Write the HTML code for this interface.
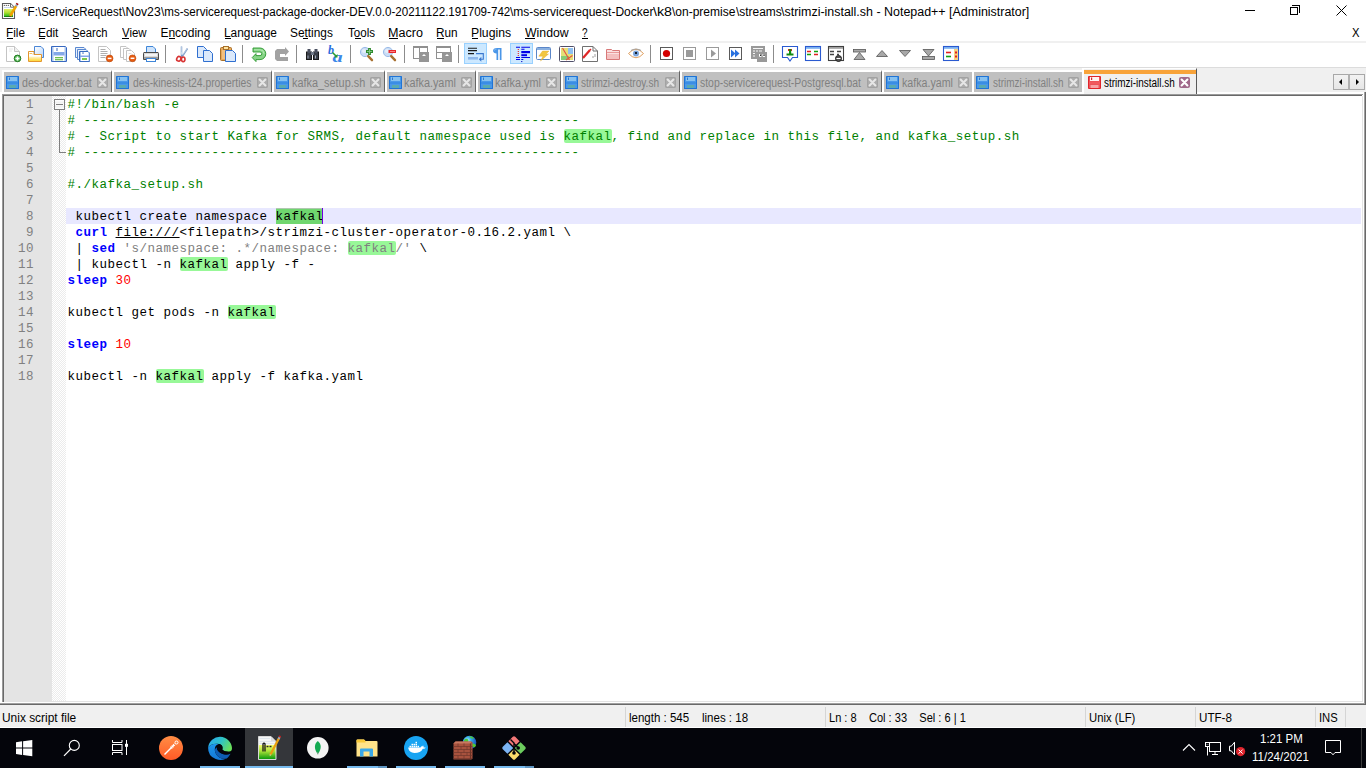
<!DOCTYPE html>
<html><head><meta charset="utf-8">
<style>
*{box-sizing:border-box}
html,body{margin:0;padding:0}
body{width:1366px;height:768px;position:relative;overflow:hidden;background:#fff;font-family:"Liberation Sans",sans-serif;font-size:12px;color:#000}
.a{position:absolute}
.tx{position:absolute;font-family:"Liberation Sans",sans-serif;font-size:12px;line-height:14px;white-space:pre;transform-origin:0 0}
.ul{position:absolute;top:38px;height:1px;background:#000}
.sep{position:absolute;top:45px;width:1px;height:18px;background:#8c8c8c}
.ic{position:absolute;overflow:visible}
.tab{position:absolute;top:70px;height:22px;background:#c0c0c0;border-left:2px solid #fff;border-top:2px solid #fff;border-right:1px solid #666}
.tab .fi{position:absolute;left:2px;top:4px}
.tab .x{position:absolute;top:5px;width:11px;height:11px;background:#acacac;border-radius:2px;box-shadow:inset 0 0 0 1px #a2a2a2}
.x svg{position:absolute;left:0;top:0}
.code{position:absolute;left:67.5px;top:97px;font-family:"Liberation Mono",monospace;font-size:12.5px;letter-spacing:0.5px;line-height:16px;white-space:pre}
.code div{height:16px}
.ln{position:absolute;left:6px;top:97px;width:28px;font-family:"Liberation Mono",monospace;font-size:12.5px;letter-spacing:0.5px;line-height:16px;text-align:right;color:#808080;white-space:pre}
.c{color:#008000}
.k{color:#0000ff;font-weight:bold}
.s{color:#808080}
.n{color:#ff0000}
.hlb{position:absolute;width:48px;height:14px;background:#98f898;border-radius:2px}
.ssep{position:absolute;top:707px;width:1px;height:20px;background:#d5d5d5}
.tbu{position:absolute;top:766px;height:2px;background:#76b9ed}

</style></head><body>
<svg width="0" height="0" style="position:absolute">
<defs>
<symbol id="sv" viewBox="0 0 13 13"><rect x="0" y="0" width="13" height="13" rx="0.5" fill="#1f74d6"/><rect x="1" y="1" width="11" height="11" fill="#4a98e8"/><rect x="2" y="1" width="9" height="4" fill="#86c1f0"/><rect x="3" y="1.5" width="1" height="2.5" fill="#2f78d0"/><rect x="1" y="6" width="11" height="2" fill="#3b8de4"/><rect x="3" y="9" width="7" height="3" fill="#5aaab0"/></symbol>
<symbol id="svr" viewBox="0 0 13 13"><rect x="0" y="0" width="13" height="13" rx="1" fill="#e0242a"/><rect x="1" y="1" width="11" height="11" fill="#ee5258"/><rect x="2" y="1" width="9" height="4" fill="#fff2f2"/><rect x="3" y="1.5" width="1.2" height="2.5" fill="#d0282e"/><rect x="1" y="6" width="11" height="2" fill="#f0595e"/><rect x="2.5" y="9" width="8" height="3" fill="#f6a3a6"/></symbol>
<symbol id="cx" viewBox="0 0 11 11"><path d="M2.6 2.6L8.4 8.4M8.4 2.6L2.6 8.4" stroke="#e6e6e6" stroke-width="2.1" stroke-linecap="round"/></symbol>
<symbol id="cxa" viewBox="0 0 11 11"><path d="M2.6 2.6L8.4 8.4M8.4 2.6L2.6 8.4" stroke="#fff" stroke-width="2.1" stroke-linecap="round"/></symbol>
</defs></svg>

<!-- title bar icon -->
<svg class="a" style="left:0;top:0" width="22" height="22" viewBox="0 0 22 22">
<defs><linearGradient id="nppg" x1="0" y1="0" x2="0" y2="1"><stop offset="0" stop-color="#e6ee6a"/><stop offset="0.45" stop-color="#b0e030"/><stop offset="0.85" stop-color="#40c020"/><stop offset="1" stop-color="#005a00"/></linearGradient></defs>
<path d="M2.5 3.5H10.5L14.5 7.5V18.5H2.5Z" fill="#fff" stroke="#5c5c5c" stroke-width="1.1"/>
<path d="M10.5 3.8V7.2H14" fill="#fff" stroke="#5c5c5c" stroke-width="0.9"/>
<circle cx="4.4" cy="5.4" r="0.7" fill="#707070"/><circle cx="6.4" cy="5.4" r="0.7" fill="#707070"/><circle cx="8.4" cy="5.4" r="0.7" fill="#707070"/>
<path d="M4 7.5H10" stroke="#c8d8f0"/>
<rect x="4" y="9" width="9" height="8" fill="url(#nppg)"/>
<path d="M10.2 16L16.2 5.8" stroke="#f0a400" stroke-width="2.6"/>
<path d="M10.2 16L10 17" stroke="#604020" stroke-width="1.2"/>
<path d="M16 6.2L16.8 4.8" stroke="#8aa0c8" stroke-width="2.2"/>
<path d="M16.8 4.6L17.6 3.3" stroke="#a00808" stroke-width="2.4"/>
</svg>
<!-- window controls -->
<div class="a" style="left:1245px;top:10px;width:10px;height:1px;background:#000"></div>
<div class="a" style="left:1290px;top:7px;width:8px;height:8px;border:1px solid #000"></div>
<div class="a" style="left:1292px;top:5px;width:8px;height:8px;border-top:1px solid #000;border-right:1px solid #000"></div>
<svg class="a" style="left:1336px;top:5px" width="11" height="11"><path d="M0.5 0.5L10.5 10.5M10.5 0.5L0.5 10.5" stroke="#000" stroke-width="1"/></svg>

<!-- menu underlines -->
<div class="ul" style="left:7px;width:6px"></div>
<div class="ul" style="left:39px;width:6px"></div>
<div class="ul" style="left:73px;width:6px"></div>
<div class="ul" style="left:122px;width:7px"></div>
<div class="ul" style="left:169px;width:6px"></div>
<div class="ul" style="left:225px;width:6px"></div>
<div class="ul" style="left:303px;width:5px"></div>
<div class="ul" style="left:355px;width:6px"></div>
<div class="ul" style="left:389px;width:9px"></div>
<div class="ul" style="left:437px;width:7px"></div>
<div class="ul" style="left:472px;width:6px"></div>
<div class="ul" style="left:525px;width:10px"></div>
<div class="ul" style="left:582px;width:6px"></div>

<div class="a" style="left:0;top:41px;width:1366px;height:2px;background:#f0f0f0"></div>

<!-- toolbar -->
<div class="sep" style="left:165px"></div>
<div class="sep" style="left:242px"></div>
<div class="sep" style="left:296px"></div>
<div class="sep" style="left:350px"></div>
<div class="sep" style="left:404px"></div>
<div class="sep" style="left:458px"></div>
<div class="sep" style="left:650px"></div>
<div class="sep" style="left:773px"></div>
<div class="a" style="left:464px;top:43px;width:23px;height:21px;background:#cce8ff;border:1px solid #99d1ff"></div>
<div class="a" style="left:510px;top:43px;width:23px;height:21px;background:#cce8ff;border:1px solid #99d1ff"></div>
<svg class="ic" style="left:6px;top:46px" width="16" height="16" viewBox="0 0 16 16"><path d="M0.5 0.5H8.5L13.5 5.5V15.5H0.5Z" fill="#fff" stroke="#c4c4c4"/><path d="M8.5 0.5V5.5H13.5" fill="#f0f0f0" stroke="#c4c4c4"/><path d="M3 3h4M3 5h3" stroke="#e6e6e6"/><circle cx="11.5" cy="12.4" r="3.3" fill="#58b858" stroke="#1f7a1f"/><path d="M11.5 10.4v4M9.5 12.4h4" stroke="#fff" stroke-width="1.5"/></svg>
<svg class="ic" style="left:28px;top:46px" width="17" height="16" viewBox="0 0 17 16"><defs><linearGradient id="opd" x1="0" y1="0" x2="1" y2="1"><stop offset="0" stop-color="#ffffff"/><stop offset="1" stop-color="#b8d4f8"/></linearGradient><linearGradient id="opf" x1="0" y1="0" x2="0" y2="1"><stop offset="0" stop-color="#fff6d0"/><stop offset="1" stop-color="#ffd838"/></linearGradient></defs><path d="M6.5 0.5H13L15.5 3V11.5H6.5Z" fill="url(#opd)" stroke="#4a86d6"/><path d="M0.5 5.5H6V8.5H13.5V15.5H0.5Z" fill="#fff" stroke="#e3962e"/><rect x="1" y="10.5" width="12" height="4.5" fill="url(#opf)"/><path d="M1.5 7.5H4L5 8.5" stroke="#f0c060" fill="none"/></svg>
<svg class="ic" style="left:51px;top:46px" width="16" height="16" viewBox="0 0 16 16"><path d="M0.5 0.5H14.5L15.5 1.5V15.5H0.5Z" fill="#fff" stroke="#3868c0"/><rect x="1" y="1" width="1.5" height="14" fill="#a8c4ee"/><rect x="13.5" y="1" width="1.5" height="14" fill="#a8c4ee"/><rect x="2.5" y="6" width="11" height="3.5" fill="#84a8e8"/><rect x="5.5" y="2" width="1" height="3" fill="#3868c0"/><rect x="4" y="11" width="8" height="1.3" fill="#70c050"/><rect x="4" y="13" width="8" height="1.3" fill="#70c050"/></svg>
<svg class="ic" style="left:75px;top:47px" width="15" height="15" viewBox="0 0 15 15"><path d="M0.5 0.5H9L10.5 2V10.5H0.5Z" fill="#e8f0fc" stroke="#5a88d0"/><path d="M2.5 2.5H11L12.5 4V12.5H2.5Z" fill="#e8f0fc" stroke="#5a88d0"/><path d="M4.5 4.5H13L14.5 6V14.5H4.5Z" fill="#fff" stroke="#3a6cc0"/><rect x="5" y="5" width="1" height="9" fill="#a8c4ee"/><rect x="13.5" y="6" width="0.9" height="8" fill="#a8c4ee"/><rect x="7.5" y="5.2" width="1" height="1.8" fill="#3a6cc0"/><rect x="5" y="8.5" width="9" height="1.5" fill="#84a8e8"/><rect x="7" y="11" width="5" height="2" fill="#7cc850"/></svg>
<svg class="ic" style="left:98px;top:46px" width="16" height="16" viewBox="0 0 16 16"><path d="M0.5 0.5H8.5L12.5 4.5V15.5H0.5Z" fill="#fff" stroke="#c4c4c4"/><path d="M2.5 3.5h5M2.5 5.5h7M2.5 7.5h7M2.5 9.5h6M2.5 11.5h5" stroke="#9a9a9a" stroke-width="0.8"/><circle cx="11.6" cy="12.4" r="3.4" fill="#e85a10"/><circle cx="11.6" cy="12.4" r="3.4" fill="none" stroke="#b84808" stroke-width="0.6"/><path d="M9.7 12.4h3.8" stroke="#fff" stroke-width="1.5"/></svg>
<svg class="ic" style="left:120px;top:46px" width="17" height="17" viewBox="0 0 17 17"><path d="M0.5 0.5H6L7.5 2V11.5H0.5Z" fill="#fff" stroke="#c4c4c4"/><path d="M3.5 2.5H9L10.5 4V13.5H3.5Z" fill="#fff" stroke="#c4c4c4"/><path d="M6.5 4.5H11.5L14.5 7.5V15.5H6.5Z" fill="#fff" stroke="#c4c4c4"/><path d="M8.5 7.5h3" stroke="#e0e0e0"/><circle cx="12.5" cy="12.3" r="3.4" fill="#e85a10"/><circle cx="12.5" cy="12.3" r="3.4" fill="none" stroke="#b84808" stroke-width="0.6"/><path d="M10.6 12.3h3.8" stroke="#fff" stroke-width="1.5"/></svg>
<svg class="ic" style="left:143px;top:46px" width="16" height="16" viewBox="0 0 16 16"><path d="M3.5 0.5H10L12.5 3V8.5H3.5Z" fill="#cfe4fb" stroke="#3f86d8"/><path d="M1 6.5H15A0.8 0.8 0 0 1 15.5 7.5V13.5H0.5V7.5A0.8 0.8 0 0 1 1 6.5Z" fill="#d8d8d8" stroke="#4a4a4a"/><rect x="2" y="8" width="12" height="2" fill="#f4f4f4"/><rect x="1" y="11" width="14" height="2" fill="#9c9c9c"/><rect x="3.5" y="12.5" width="9" height="3" fill="#fff" stroke="#3f86d8"/></svg>
<svg class="ic" style="left:176px;top:46px" width="13" height="16" viewBox="0 0 13 16"><path d="M5.5 11L5.5 0.5M6.2 10.5L11.5 2.5" stroke="#7c9cc8" stroke-width="1.5"/><path d="M5.5 9L5.5 1M6.5 9L11 3" stroke="#e8f0fa" stroke-width="0.5"/><path d="M5 8l1-2" stroke="#d0e0f0"/><ellipse cx="2.8" cy="12.8" rx="2" ry="2.4" fill="none" stroke="#d83434" stroke-width="1.6" transform="rotate(30 2.8 12.8)"/><ellipse cx="7.2" cy="13.3" rx="1.8" ry="2.3" fill="none" stroke="#d83434" stroke-width="1.6"/></svg>
<svg class="ic" style="left:197px;top:46px" width="16" height="16" viewBox="0 0 16 16"><path d="M0.5 0.5H6.5L9.5 3.5V11.5H0.5Z" fill="#dbe9fb" stroke="#2f6fd0"/><path d="M6.5 4.5H12.5L15.5 7.5V15.5H6.5Z" fill="#dbe9fb" stroke="#2f6fd0"/></svg>
<svg class="ic" style="left:220px;top:46px" width="16" height="16" viewBox="0 0 16 16"><rect x="0.5" y="1.5" width="11" height="13" rx="1" fill="#e8a85a" stroke="#a8702a"/><rect x="3.5" y="0.5" width="5" height="3" fill="#ffe4a0" stroke="#a8702a"/><rect x="2" y="4" width="8" height="9" fill="#f2c080"/><path d="M5.5 4.5H12.5L15.5 7.5V15.5H5.5Z" fill="#dbe9fb" stroke="#2f6fd0"/></svg>
<svg class="ic" style="left:252px;top:47px" width="15" height="16" viewBox="0 0 15 16"><path d="M1 1H8A5.8 5.8 0 0 1 8 12.6H4V14.6L0.2 10.6L4 6.6V8.6H8A1.8 1.8 0 0 0 8 5H1Z" fill="#86d486" stroke="#2a962e" stroke-width="0.9" stroke-linejoin="round"/><path d="M2 2.8H8A4 4 0 0 1 12 6.8" fill="none" stroke="#b8ecb8" stroke-width="0.9"/></svg>
<svg class="ic" style="left:275px;top:47px" width="14" height="14" viewBox="0 0 14 14"><path d="M2 2H10V0L14 4.5L10 9V7H5V10H13V14H2L0 12V4Z" fill="#a2a2a2"/></svg>
<svg class="ic" style="left:306px;top:48px" width="13" height="12" viewBox="0 0 13 12"><rect x="0.5" y="4" width="5" height="7.5" fill="#3a3f48" stroke="#1a1a1a"/><rect x="7.5" y="4" width="5" height="7.5" fill="#3a3f48" stroke="#1a1a1a"/><rect x="1.5" y="1" width="3" height="4" fill="#4a5060"/><rect x="8.5" y="1" width="3" height="4" fill="#4a5060"/><rect x="5" y="4" width="3" height="3" fill="#6d7686"/><path d="M2 7.5v3M9.5 7.5v3" stroke="#a0a8b8"/></svg>
<svg class="ic" style="left:327px;top:45px" width="18" height="18" viewBox="0 0 18 18"><text x="1" y="9" font-family="Liberation Serif" font-style="italic" font-weight="bold" font-size="12" fill="#2a6ee0">b</text><text transform="translate(5.5,17) scale(1.45,1)" font-family="Liberation Serif" font-style="italic" font-weight="bold" font-size="14" fill="#3a86e8">a</text><path d="M5.5 7.5L9.5 11.5" stroke="#2a9a30" stroke-width="1.6"/><path d="M10.5 12.5L10.5 9L7 12.5Z" fill="#2a9a30"/></svg>
<svg class="ic" style="left:360px;top:47px" width="14" height="15" viewBox="0 0 14 15"><circle cx="5" cy="5" r="4.6" fill="#c9dcf5" stroke="#9cbce8"/><circle cx="4" cy="4" r="2" fill="#e4eefa"/><path d="M8.2 9.2L12 13.2" stroke="#a87030" stroke-width="2.4" stroke-linecap="round"/><path d="M9.5 1v7M6 4.5h7" stroke="#2e8a2e" stroke-width="2.8"/><path d="M9.5 2v5M7 4.5h5" stroke="#88cc88" stroke-width="0.9"/></svg>
<svg class="ic" style="left:383px;top:47px" width="14" height="15" viewBox="0 0 14 15"><circle cx="5" cy="5" r="4.6" fill="#c9dcf5" stroke="#9cbce8"/><circle cx="4" cy="4" r="2" fill="#e4eefa"/><path d="M8.2 9.2L12 13.2" stroke="#a87030" stroke-width="2.4" stroke-linecap="round"/><rect x="5.5" y="3" width="7.5" height="3" fill="#e8262a"/><path d="M7 4.5h5" stroke="#ff9a9a" stroke-width="0.8"/></svg>
<svg class="ic" style="left:413px;top:46px" width="16" height="16" viewBox="0 0 16 16"><rect x="0.5" y="0.5" width="14" height="12" fill="#fff" stroke="#909090"/><rect x="0" y="0" width="15" height="2" fill="#909090"/><path d="M6.5 2v11" stroke="#909090"/><rect x="6" y="6" width="10" height="10" fill="#959595"/><path d="M9 10L11 8L13 10Z" fill="#fff"/></svg>
<svg class="ic" style="left:436px;top:46px" width="16" height="16" viewBox="0 0 16 16"><rect x="0.5" y="0.5" width="14" height="12" fill="#fff" stroke="#909090"/><rect x="0" y="0" width="15" height="2" fill="#909090"/><path d="M1 6.5h13" stroke="#909090"/><rect x="6" y="6" width="10" height="10" fill="#959595"/><path d="M9 10L11 8L13 10Z" fill="#fff"/></svg>
<svg class="ic" style="left:462px;top:42px" width="24" height="24" viewBox="0 0 24 24"><path d="M6 6.3H15M6 8.6H15M6 11.6H12" stroke="#181818" stroke-width="1.1"/><rect x="6" y="15" width="10" height="2.6" fill="#8cb6ea"/><path d="M14 11.6H21.3V17.3H18.5" fill="none" stroke="#3a78d0" stroke-width="1.1"/><path d="M16.8 17.3L19.3 14.8V19.8Z" fill="#3a78d0"/></svg>
<svg class="ic" style="left:493px;top:48px" width="9" height="13" viewBox="0 0 9 13"><path d="M3.5 0H8.5V12H6.8V1.5H5.2V12H3.5V5.6C1.5 5.6 0 4.4 0 2.8C0 1.2 1.5 0 3.5 0Z" fill="#4a96e8"/><path d="M1.2 2.5C1.5 1.5 2.5 1 3.5 1" stroke="#9cc8f4" stroke-width="0.8" fill="none"/></svg>
<svg class="ic" style="left:462px;top:42px" width="72" height="24" viewBox="0 0 72 24"><path d="M54 5.3H58M59.3 5.3H68M59.3 7.3H62.5M54 15.5H58M59.3 15.5H68M54 17.5H58M59.3 17.5H61.3" stroke="#0000e8" stroke-width="1.1"/><rect x="59.3" y="9" width="8.7" height="2.2" fill="#0000e8"/><rect x="59.3" y="12.2" width="5.7" height="2" fill="#0000e8"/><rect x="59.2" y="19" width="1.1" height="1.1" fill="#0000c8"/><path d="M56.3 7v1M56.3 9v1M56.3 11v1M56.3 13v1" stroke="#e82020" stroke-width="1.1"/></svg>
<svg class="ic" style="left:536px;top:47px" width="15" height="14" viewBox="0 0 15 14"><rect x="0.5" y="0.5" width="14" height="12" rx="1" fill="#fff" stroke="#5a86c8"/><rect x="1" y="1" width="13" height="2" fill="#8ab0e0"/><path d="M6.5 4H13L10 7H12.5L4.5 14L7 9.2H2.8Z" fill="#f2c640" stroke="#e0a828" stroke-width="0.4"/></svg>
<svg class="ic" style="left:559px;top:46px" width="16" height="16" viewBox="0 0 16 16"><rect x="0.5" y="0.5" width="15" height="15" rx="1" fill="#fff" stroke="#50506a"/><rect x="2" y="2" width="12" height="12" fill="#e4e078"/><rect x="9" y="2" width="5" height="6" fill="#90c0f0"/><rect x="2" y="10" width="8" height="4" fill="#88cc78"/><path d="M3.5 2L10.5 14M13.5 9.5L7 14" stroke="#e85040" stroke-width="1.1"/></svg>
<svg class="ic" style="left:582px;top:46px" width="16" height="16" viewBox="0 0 16 16"><path d="M0.5 0.5H11L15.5 5V15.5H0.5Z" fill="#fff" stroke="#707070"/><path d="M11 0.5V5H15.5" fill="none" stroke="#707070"/><path d="M1 12L8 4" stroke="#e02828" stroke-width="2.2"/><path d="M8 4L9 3" stroke="#e02828" stroke-width="1.5"/><path d="M11 10v2M13 8v3" stroke="#a0a0a0"/></svg>
<svg class="ic" style="left:606px;top:49px" width="14" height="11" viewBox="0 0 14 11"><path d="M0.5 0.5H5.5L6.5 1.5H13.5V10.5H0.5Z" fill="#fbe0e0" stroke="#d87878"/><path d="M1 3.5H13" stroke="#e89a9a"/><rect x="1" y="5" width="12" height="5" fill="#f4c0c0"/></svg>
<svg class="ic" style="left:628px;top:48px" width="16" height="11" viewBox="0 0 16 11"><path d="M0.5 5.5Q8 -3 15.5 5.5Q8 14 0.5 5.5Z" fill="#fff" stroke="#e0a060" stroke-width="1"/><path d="M3 2.5Q8 -0.5 13 2.5" stroke="#a0a0a0" stroke-width="1.2" fill="none"/><circle cx="8" cy="5.5" r="3" fill="#7aa4dc"/><circle cx="8" cy="5" r="1.1" fill="#000"/></svg>
<svg class="ic" style="left:660px;top:47px" width="13" height="13" viewBox="0 0 13 13"><rect x="0.5" y="0.5" width="12" height="12" fill="#fff" stroke="#5a5a5a"/><circle cx="6.5" cy="6.5" r="3.6" fill="#d40000"/></svg>
<svg class="ic" style="left:683px;top:47px" width="13" height="13" viewBox="0 0 13 13"><rect x="0.5" y="0.5" width="12" height="12" fill="#fff" stroke="#9a9a9a"/><rect x="3" y="3" width="7" height="7" fill="#9a9a9a"/></svg>
<svg class="ic" style="left:706px;top:47px" width="13" height="13" viewBox="0 0 13 13"><rect x="0.5" y="0.5" width="12" height="12" fill="#fff" stroke="#9a9a9a"/><path d="M5 2.5L10 6.5L5 10.5Z" fill="#9a9a9a"/></svg>
<svg class="ic" style="left:729px;top:47px" width="13" height="13" viewBox="0 0 13 13"><rect x="0.5" y="0.5" width="12" height="12" fill="#fff" stroke="#5a5a5a"/><path d="M2 2.5L6.5 6.5L2 10.5ZM6 2.5L10.5 6.5L6 10.5Z" fill="#2a72e0"/></svg>
<svg class="ic" style="left:751px;top:46px" width="16" height="16" viewBox="0 0 16 16"><rect x="0" y="0" width="14" height="13" fill="#999"/><path d="M2 2.5h10M2 5h2M5 5h2M8 5h3M2 7.5h2M2 10h2" stroke="#fff" stroke-width="0.9"/><rect x="6" y="6" width="10" height="10" fill="#999"/><path d="M8.5 8v2.5h2M12 8v2.5h2" stroke="#fff" stroke-width="1"/></svg>
<svg class="ic" style="left:782px;top:46px" width="16" height="16" viewBox="0 0 16 16"><path d="M0.5 0.5H15.5V11.5H10.5L8 15L5.5 11.5H0.5Z" fill="#fff" stroke="#2a5ad0" stroke-width="1.1"/><path d="M6 3h4v2h-4z" fill="#e02020"/><rect x="7" y="3" width="2.2" height="5" fill="#108a10"/><rect x="4.5" y="7.5" width="7" height="2" fill="#108a10"/></svg>
<svg class="ic" style="left:805px;top:46px" width="16" height="15" viewBox="0 0 16 15"><rect x="0.5" y="0.5" width="15" height="14" fill="#fff" stroke="#2a5ad0" stroke-width="1.1"/><rect x="1" y="1" width="14" height="1.8" fill="#7ab0f0"/><path d="M2 5.5h4M9 8.5h4" stroke="#e02020" stroke-width="1.6"/><path d="M9 5.5h4M2 8.5h4" stroke="#10a010" stroke-width="1.6"/></svg>
<svg class="ic" style="left:828px;top:46px" width="16" height="16" viewBox="0 0 16 16"><rect x="0.5" y="0.5" width="15" height="14" fill="#fff" stroke="#404040" stroke-width="1.1"/><rect x="1" y="1" width="14" height="1.8" fill="#a0a0a0"/><path d="M2 5.5h4M9 5.5h4M2 8.5h4M9 8.5h2" stroke="#444" stroke-width="1.5"/><circle cx="10.5" cy="12.5" r="3" fill="#555" stroke="#222"/><path d="M8.5 12.5h4" stroke="#fff"/></svg>
<svg class="ic" style="left:853px;top:49px" width="13" height="11" viewBox="0 0 13 11"><rect x="0.5" y="0.5" width="12" height="2.5" fill="#a8a8a8" stroke="#555" stroke-width="0.8"/><path d="M6.5 3.5L1 10.5H12Z" fill="#a8a8a8" stroke="#555" stroke-width="0.8"/></svg>
<svg class="ic" style="left:876px;top:50px" width="12" height="7" viewBox="0 0 12 7"><path d="M6 0.5L0.5 6.5H11.5Z" fill="#a8a8a8" stroke="#555" stroke-width="0.8"/></svg>
<svg class="ic" style="left:899px;top:50px" width="12" height="7" viewBox="0 0 12 7"><path d="M6 6.5L0.5 0.5H11.5Z" fill="#a8a8a8" stroke="#555" stroke-width="0.8"/></svg>
<svg class="ic" style="left:922px;top:49px" width="13" height="11" viewBox="0 0 13 11"><path d="M6.5 7L1 0.5H12Z" fill="#a8a8a8" stroke="#555" stroke-width="0.8"/><rect x="0.5" y="7.5" width="12" height="3" fill="#a8a8a8" stroke="#555" stroke-width="0.8"/></svg>
<svg class="ic" style="left:943px;top:46px" width="16" height="15" viewBox="0 0 16 15"><rect x="0.5" y="0.5" width="15" height="14" fill="#fff" stroke="#2a5ad0" stroke-width="1.1"/><rect x="1" y="1" width="14" height="1.8" fill="#7ab0f0"/><rect x="11" y="3" width="4" height="11" fill="#f8d080"/><path d="M3 6.5h5" stroke="#e02020" stroke-width="1.6"/><path d="M3 10.5h5" stroke="#10a010" stroke-width="1.6"/><rect x="12" y="5.5" width="2" height="2" fill="#e02020"/><rect x="12" y="9.5" width="2" height="2" fill="#e02020"/></svg>

<!-- tab bar -->
<div class="a" style="left:0;top:67px;width:1366px;height:1px;background:#dcdcdc"></div>
<div class="a" style="left:0;top:68px;width:1366px;height:24px;background:#f0f0f0"></div>
<div class="a" style="left:0;top:92px;width:1366px;height:2px;background:#fff"></div>
<div class="tab" style="left:2px;width:110px"><svg class="fi" width="13" height="13"><use href="#sv"/></svg><i class="x" style="left:93px"><svg width="11" height="11"><use href="#cx"/></svg></i></div>
<div class="tab" style="left:112px;width:160px"><svg class="fi" width="13" height="13"><use href="#sv"/></svg><i class="x" style="left:143px"><svg width="11" height="11"><use href="#cx"/></svg></i></div>
<div class="tab" style="left:272px;width:113px"><svg class="fi" width="13" height="13"><use href="#sv"/></svg><i class="x" style="left:96px"><svg width="11" height="11"><use href="#cx"/></svg></i></div>
<div class="tab" style="left:385px;width:91px"><svg class="fi" width="13" height="13"><use href="#sv"/></svg><i class="x" style="left:74px"><svg width="11" height="11"><use href="#cx"/></svg></i></div>
<div class="tab" style="left:476px;width:85px"><svg class="fi" width="13" height="13"><use href="#sv"/></svg><i class="x" style="left:68px"><svg width="11" height="11"><use href="#cx"/></svg></i></div>
<div class="tab" style="left:561px;width:119px"><svg class="fi" width="13" height="13"><use href="#sv"/></svg><i class="x" style="left:102px"><svg width="11" height="11"><use href="#cx"/></svg></i></div>
<div class="tab" style="left:680px;width:202px"><svg class="fi" width="13" height="13"><use href="#sv"/></svg><i class="x" style="left:185px"><svg width="11" height="11"><use href="#cx"/></svg></i></div>
<div class="tab" style="left:882px;width:91px"><svg class="fi" width="13" height="13"><use href="#sv"/></svg><i class="x" style="left:74px"><svg width="11" height="11"><use href="#cx"/></svg></i></div>
<div class="tab" style="left:972px;width:110px;border-right:0"><svg class="fi" width="13" height="13"><use href="#sv"/></svg><i class="x" style="left:94px"><svg width="11" height="11"><use href="#cx"/></svg></i></div>
<div class="a" style="left:1082px;top:68px;width:115px;height:26px;border-left:2px solid #fff;border-top:1px solid #fff;border-right:1px solid #5a5a5a;background:#f0f0f0"><div class="a" style="left:0;top:1px;width:112px;height:4px;background:#f8a33a"></div><svg class="a" style="left:4px;top:7px" width="13" height="13"><use href="#svr"/></svg><i class="a" style="left:95px;top:8px;width:11px;height:11px;background:#a0688a;border-radius:2px"><svg width="11" height="11"><use href="#cxa"/></svg></i></div>
<!-- tab scroll arrows -->
<div class="a" style="left:1333px;top:74px;width:16px;height:16px;border:1px solid #a8a8a8;background:linear-gradient(#f2f2f2,#e6e6e6)"></div>
<div class="a" style="left:1348px;top:74px;width:17px;height:16px;border:1px solid #a8a8a8;border-left:2px solid #b0b0b0;background:linear-gradient(#f2f2f2,#e6e6e6)"></div>
<svg class="a" style="left:1338px;top:78px" width="6" height="8"><path d="M1 4L4 1V7Z" fill="#000"/></svg>
<svg class="a" style="left:1354px;top:78px" width="6" height="8"><path d="M5 4L2 1V7Z" fill="#000"/></svg>

<!-- editor frame -->
<div class="a" style="left:4px;top:96px;width:1358px;height:605px;background:#fff"></div>
<div class="a" style="left:2px;top:94px;width:1361px;height:1px;background:#9a9a9a"></div>
<div class="a" style="left:2px;top:95px;width:1360px;height:1px;background:#696969"></div>
<div class="a" style="left:2px;top:94px;width:1px;height:608px;background:#9a9a9a"></div>
<div class="a" style="left:3px;top:95px;width:1px;height:607px;background:#696969"></div>
<div class="a" style="left:1362px;top:96px;width:1px;height:606px;background:#e3e3e3"></div>
<div class="a" style="left:4px;top:701px;width:1359px;height:1px;background:#e3e3e3"></div>
<div class="a" style="left:0;top:702px;width:1364px;height:1px;background:#fff"></div>
<div class="a" style="left:1363px;top:92px;width:1px;height:611px;background:#fff"></div>
<div class="a" style="left:0;top:703px;width:1366px;height:1px;background:#a0a0a0"></div>
<div class="a" style="left:0;top:704px;width:1366px;height:1px;background:#696969"></div>
<div class="a" style="left:1364px;top:92px;width:1px;height:612px;background:#a0a0a0"></div>
<div class="a" style="left:1365px;top:92px;width:1px;height:612px;background:#696969"></div>

<div class="a" style="left:4px;top:96px;width:48px;height:605px;background:#e4e4e4"></div>
<div class="a" style="left:52px;top:96px;width:14px;height:605px;background-color:#fff;background-image:repeating-conic-gradient(#ececec 0 25%,#fff 0 50%);background-size:2px 2px"></div>
<div class="a" style="left:66px;top:208px;width:1295px;height:16px;background:#e8e8ff"></div>
<!-- fold markers -->
<div class="a" style="left:54px;top:99px;width:11px;height:11px;border:1px solid #808080;background:linear-gradient(#fff,#f0f0f0 30%,#fff 50%,#f0f0f0 70%,#fff)"></div>
<div class="a" style="left:56px;top:104px;width:7px;height:1px;background:#808080"></div>
<div class="a" style="left:59px;top:110px;width:1px;height:43px;background:#808080"></div>
<div class="a" style="left:59px;top:152px;width:7px;height:1px;background:#808080"></div>

<div class="hlb" style="left:564px;top:129px"></div>
<div class="hlb" style="left:348px;top:241px"></div>
<div class="hlb" style="left:180px;top:257px"></div>
<div class="hlb" style="left:228px;top:305px"></div>
<div class="hlb" style="left:156px;top:369px"></div>
<div class="a" style="left:276px;top:208px;width:47px;height:16px;background:#6fd66f;border-top:1px solid #b0c8b0"></div>
<div class="ln">1
2
3
4
5
6
7
8
9
10
11
12
13
14
15
16
17
18</div>

<div class="code"><div class="c">#!/bin/bash -e</div><div class="c"># --------------------------------------------------------------</div><div class="c"># - Script to start Kafka for SRMS, default namespace used is kafkal, find and replace in this file, and kafka_setup.sh</div><div class="c"># --------------------------------------------------------------</div><div></div><div class="c">#./kafka_setup.sh</div><div></div><div> kubectl create namespace kafkal</div><div> <span class="k">curl</span> <u>file:///</u>&lt;filepath&gt;/strimzi-cluster-operator-0.16.2.yaml \</div><div> | <span class="k">sed</span> <span class="s">'s/namespace: .*/namespace: kafkal/'</span> \</div><div> | kubectl -n kafkal apply -f -</div><div><span class="k">sleep</span> <span class="n">30</span></div><div></div><div>kubectl get pods -n kafkal</div><div></div><div><span class="k">sleep</span> <span class="n">10</span></div><div></div><div>kubectl -n kafkal apply -f kafka.yaml</div></div>
<div class="a" style="left:322px;top:208px;width:1px;height:16px;background:#6a00e0"></div>

<!-- status bar -->
<div class="a" style="left:0;top:705px;width:1366px;height:22px;background:#f0f0f0"></div>
<div class="a" style="left:0;top:727px;width:1366px;height:1px;background:#fff"></div>
<div class="ssep" style="left:625px"></div>
<div class="ssep" style="left:825px"></div>
<div class="ssep" style="left:1085px"></div>
<div class="ssep" style="left:1195px"></div>
<div class="ssep" style="left:1315px"></div>
<div class="ssep" style="left:1345px"></div>

<!-- taskbar -->
<div class="a" style="left:0;top:728px;width:1366px;height:40px;background:#04050b"></div>
<div class="a" style="left:245px;top:728px;width:48px;height:38px;background:#34363a"></div>
<div class="tbu" style="left:200px;width:40px;background:#76b9ed"></div>
<div class="tbu" style="left:245px;width:48px;background:#76b9ed"></div>
<div class="tbu" style="left:347px;width:31px;background:#76b9ed"></div>
<div class="tbu" style="left:378px;width:9px;background:#5f95c2"></div>
<div class="tbu" style="left:396px;width:40px;background:#76b9ed"></div>
<div class="tbu" style="left:445px;width:40px;background:#76b9ed"></div>
<div class="tbu" style="left:494px;width:31px;background:#76b9ed"></div>
<div class="tbu" style="left:525px;width:9px;background:#5f95c2"></div>
<svg class="ic" style="left:16px;top:740px" width="17" height="17" viewBox="0 0 17 17"><path d="M0 2.2L6.1 1.35V7.6H0Z M7.1 1.2L16.3 0V7.6H7.1Z M0 8.6H6.1V14.9L0 14.05Z M7.1 8.6H16.3V16.3L7.1 15.1Z" fill="#fff"/></svg>
<svg class="ic" style="left:63px;top:739px" width="18" height="18" viewBox="0 0 18 18"><circle cx="11.3" cy="6.4" r="5" fill="none" stroke="#fff" stroke-width="1.1"/><path d="M7.8 10L1 16.8" stroke="#fff" stroke-width="1.2"/></svg>
<svg class="ic" style="left:111px;top:739px" width="18" height="18" viewBox="0 0 18 18"><path d="M1.5 1v2.5H11V1M1.5 16v-2.5H11V16" fill="none" stroke="#fff" stroke-width="1"/><rect x="1.5" y="5.5" width="9.5" height="6" fill="none" stroke="#fff" stroke-width="1"/><path d="M15.5 1v15" stroke="#fff" stroke-width="1"/><rect x="14" y="4.8" width="3" height="3" fill="#fff"/></svg>
<svg class="ic" style="left:159px;top:736px" width="24" height="24" viewBox="0 0 24 24"><defs><linearGradient id="pmg" x1="0" y1="0" x2="0" y2="1"><stop offset="0" stop-color="#ff8d45"/><stop offset="1" stop-color="#ff5a26"/></linearGradient></defs><circle cx="12" cy="12" r="12" fill="url(#pmg)"/><path d="M5.5 18.5L15 9" stroke="#fff" stroke-width="1.4"/><path d="M12 12L16 8" stroke="#fff" stroke-width="2.6" stroke-dasharray="1 0.8"/><circle cx="17.5" cy="6.5" r="1.5" fill="none" stroke="#fff" stroke-width="1"/></svg>
<svg class="ic" style="left:208px;top:736px" width="24" height="24" viewBox="0 0 24 24"><defs><linearGradient id="edg1" x1="0" y1="0.2" x2="1" y2="0.6"><stop offset="0" stop-color="#2aa8ee"/><stop offset="0.5" stop-color="#2ec2c8"/><stop offset="1" stop-color="#6ae05a"/></linearGradient><linearGradient id="edg2" x1="0" y1="0" x2="0" y2="1"><stop offset="0" stop-color="#1e96ea"/><stop offset="1" stop-color="#1478d8"/></linearGradient></defs><path d="M0.1 11.5A12 12 0 0 1 24 12C24 14.5 23 15.8 20.5 15.8C18 15.8 15.5 15 14.2 13.6C15.2 11 14 8.5 11 8C6 7.2 2 8.8 0.1 11.5Z" fill="url(#edg1)"/><path d="M0.1 11.5C2 8.8 6 7.2 11 8C8 8.6 6.5 11 6.8 14C7.5 19.5 12 23 17 22.8C19 22.6 20.3 21.2 21.2 19.7A12 12 0 0 1 0.1 11.5Z" fill="url(#edg2)"/><path d="M6.8 14C7.5 19.5 12 23 17 22.8C19 22.6 20.3 21.2 21.2 19.7L22.7 17.5C20 19.2 16 18.8 13 17.2C10.2 15.6 8.8 13.5 8.8 11.2C8 11.8 7 12.8 6.8 14Z" fill="#0e5cb2"/><path d="M8.8 11.2C8.8 13.5 10.2 15.6 13 17.2C16 18.8 20 19.2 22.7 17.5L23.5 15.5C22.8 15.8 21.5 15.8 20.5 15.8C18 15.8 15.5 15 14.2 13.6C15.2 11 14 8.5 11 8C10 9 8.8 10 8.8 11.2Z" fill="#04050b"/></svg>
<svg class="ic" style="left:257px;top:735px" width="24" height="26" viewBox="0 0 24 26"><defs><linearGradient id="nppt" x1="0" y1="0" x2="0" y2="1"><stop offset="0" stop-color="#f4ff70"/><stop offset="0.45" stop-color="#a8e038"/><stop offset="1" stop-color="#0c9a0c"/></linearGradient></defs><path d="M1.5 1.5H14L19 6.5V24.5H1.5Z" fill="#f4f6f6" stroke="#d8d8d8"/><path d="M14 1.5V6.5H19Z" fill="#dcdcdc"/><path d="M2.5 3.5H13M2.5 6.5H18M2.5 8.5H18" stroke="#dfe6ec" stroke-width="1.2"/><rect x="2" y="10" width="16.5" height="14" fill="url(#nppt)"/><path d="M6 16.5V8.8Q7 7.4 8 8.8V16.5" stroke="#141414" stroke-width="1.3" fill="none"/><path d="M9.5 11.5h2M12.5 11.5h2" stroke="#222" stroke-width="1.6"/><path d="M13.5 19.5L21.8 3.5" stroke="#e8a010" stroke-width="2.3"/><path d="M13.5 19.5L13 20.5" stroke="#f0d0a0" stroke-width="1.5"/><path d="M21.6 4L22.6 2" stroke="#a0aab8" stroke-width="2.1"/><path d="M22.5 2.2L23.2 0.8" stroke="#c02020" stroke-width="2.1"/></svg>
<svg class="ic" style="left:307px;top:737px" width="22" height="22" viewBox="0 0 22 22"><circle cx="10.8" cy="10.8" r="10.8" fill="#f4f4f4"/><path d="M10.8 4C14.5 7 14.8 12 10.8 17C6.8 12 7.1 7 10.8 4Z" fill="#13aa52"/><path d="M10.8 15v2.5" stroke="#8a9a8a" stroke-width="0.8"/></svg>
<svg class="ic" style="left:356px;top:739px" width="22" height="18" viewBox="0 0 22 18"><path d="M0.5 1.5A1 1 0 0 1 1.5 0.5H8L9.5 2H20.5A1 1 0 0 1 21.5 3V17.5H0.5Z" fill="#ffe38a"/><path d="M0.5 1.5A1 1 0 0 1 1.5 0.5H8L9.5 2V3.5H0.5Z" fill="#f8c838"/><path d="M4 17.5V10.5A1 1 0 0 1 5 9.5H16A1 1 0 0 1 17 10.5V17.5H13.5V12.5H7.5V17.5Z" fill="#3aa8e8"/></svg>
<svg class="ic" style="left:404px;top:736px" width="24" height="24" viewBox="0 0 24 24"><circle cx="12" cy="12" r="12" fill="#18a4f2"/><path d="M4.2 11.6H16.5C17 10.8 17.8 10.2 18.5 10.4L19 9.2C19.5 10 19.8 10.8 19.6 11.4C20.3 11.5 21 11.6 21.6 11.5C21 12.8 19.8 13 18.8 12.8C17.5 15.8 14.5 17 10.5 17C7 17 4.6 15 4.2 11.6Z" fill="#fff"/><rect x="5.5" y="9.8" width="1.5" height="1.5" fill="#fff"/><rect x="7.5" y="9.8" width="1.5" height="1.5" fill="#fff"/><rect x="9.5" y="9.8" width="1.5" height="1.5" fill="#fff"/><rect x="11.5" y="9.8" width="1.5" height="1.5" fill="#fff"/><rect x="13.5" y="9.8" width="1.5" height="1.5" fill="#fff"/><rect x="7.5" y="7.8" width="1.5" height="1.5" fill="#fff"/><rect x="9.5" y="7.8" width="1.5" height="1.5" fill="#fff"/><rect x="11.5" y="7.8" width="1.5" height="1.5" fill="#fff"/><rect x="11.5" y="5.8" width="1.5" height="1.5" fill="#fff"/></svg>
<svg class="ic" style="left:453px;top:735px" width="24" height="25" viewBox="0 0 24 25"><defs><radialGradient id="glb" cx="0.35" cy="0.35" r="0.7"><stop offset="0" stop-color="#b8f0ff"/><stop offset="0.4" stop-color="#30a8e8"/><stop offset="1" stop-color="#1848b8"/></radialGradient></defs><circle cx="16.5" cy="7.5" r="6.8" fill="url(#glb)"/><path d="M11 5C13 3 15 3.5 15.5 5.5C15 7.5 13 7.5 11.5 8Z M18.5 9C20.5 8 22.5 9 23 10.5C22 13 20 12.5 19 11.5Z M16 1.5C18 1 20 2 21 3.5C19 4 17.5 3 16 1.5Z" fill="#4ec838"/><path d="M0.5 8.5L2.5 6.5H18.5L19.5 7.5V23.5L18.5 24.5H0.5Z" fill="#a8523e"/><path d="M0.5 8.5L2.5 6.5H18.5L17.5 8.5Z" fill="#c87860"/><path d="M0.5 11.5H19.5M0.5 14.5H19.5M0.5 17.5H19.5M0.5 20.5H19.5M0.5 23.5H19.5" stroke="#70382c" stroke-width="0.7"/><path d="M5 8.5v3M11 8.5v3M8 11.5v3M14 11.5v3M5 14.5v3M11 14.5v3M8 17.5v3M14 17.5v3M5 20.5v3M11 20.5v3" stroke="#70382c" stroke-width="0.7"/><path d="M17.5 8.5V24.5" stroke="#6a3428" stroke-width="1.2"/></svg>
<svg class="ic" style="left:502px;top:736px" width="24" height="24" viewBox="0 0 24 24"><path d="M12 0.3Q12.7 0.3 13.2 0.8L17.6 5.2L12 10.8L6.4 5.2L10.8 0.8Q11.3 0.3 12 0.3Z" fill="#f47878"/><path d="M18.6 6.2L23.2 10.8Q23.7 11.3 23.7 12Q23.7 12.7 23.2 13.2L18.6 17.8L12.8 12Z" fill="#6ccc5e"/><path d="M12 13.2L17.6 18.8L13.2 23.2Q12.7 23.7 12 23.7Q11.3 23.7 10.8 23.2L6.4 18.8Z" fill="#fadc6c"/><path d="M5.4 6.2L11.2 12L5.4 17.8L0.8 13.2Q0.3 12.7 0.3 12Q0.3 11.3 0.8 10.8Z" fill="#7cb4f4"/><path d="M8.5 3.5L12 7V16.5M12 7.5L16 11.5" stroke="#05060b" stroke-width="1.4" fill="none"/><circle cx="12" cy="17" r="1.8" fill="#05060b"/><circle cx="16.2" cy="12" r="1.8" fill="#05060b"/></svg>
<svg class="ic" style="left:1182px;top:743px" width="14" height="9" viewBox="0 0 14 9"><path d="M1 7.5L7 1.5L13 7.5" fill="none" stroke="#fff" stroke-width="1.1"/></svg>
<svg class="ic" style="left:1204px;top:741px" width="18" height="16" viewBox="0 0 18 16"><rect x="5.5" y="1.5" width="11" height="9" fill="none" stroke="#fff"/><rect x="1.5" y="1.5" width="4" height="4" fill="#05060b" stroke="#fff"/><path d="M2.8 3.3L3.5 4L4.2 3.3" stroke="#fff" stroke-width="0.6" fill="none"/><path d="M3.5 5.5v9M11 10.5v3M8 13.5h6" stroke="#fff"/></svg>
<svg class="ic" style="left:1228px;top:741px" width="18" height="16" viewBox="0 0 18 16"><path d="M1.5 5.2H3.3L6.5 1.2V13.8L3.3 9.8H1.5Z" fill="none" stroke="#fff" stroke-width="1"/><circle cx="12.6" cy="10.6" r="4.6" fill="#e0242c"/><path d="M10.6 8.6L14.6 12.6M14.6 8.6L10.6 12.6" stroke="#fff" stroke-width="1"/></svg>
<svg class="ic" style="left:1324px;top:739px" width="18" height="18" viewBox="0 0 18 18"><path d="M1.5 1.5H16.5V13.5H11L9 15.8L7 13.5H1.5Z" fill="none" stroke="#fff" stroke-width="1"/></svg>
<div class="a" style="left:1361px;top:728px;width:1px;height:40px;background:#3a3a3a"></div>

<div class="tx" style="left:23.00px;top:5px;color:#000;transform:scaleX(0.9776)">*F:</div>
<div class="tx" style="left:38.00px;top:5px;color:#000;transform:scaleX(0.9518)">\ServiceRequest</div>
<div class="tx" style="left:121.80px;top:5px;color:#000;transform:scaleX(1.0176)">\Nov23</div>
<div class="tx" style="left:160.50px;top:5px;color:#000;transform:scaleX(0.9667)">\ms-servicerequest-package-docker-DEV.0.0-20211122.191709-742</div>
<div class="tx" style="left:509.80px;top:5px;color:#000;transform:scaleX(1.0002)">\ms-servicerequest-Docker</div>
<div class="tx" style="left:653.20px;top:5px;color:#000;transform:scaleX(1.1863)">\k8</div>
<div class="tx" style="left:672.20px;top:5px;color:#000;transform:scaleX(1.0006)">\on-premise</div>
<div class="tx" style="left:735.60px;top:5px;color:#000;transform:scaleX(0.9953)">\streams</div>
<div class="tx" style="left:781.40px;top:5px;color:#000;transform:scaleX(1.0372)">\strimzi-install.sh - Notepad++ [Administrator]</div>
<div class="tx" style="left:6.42px;top:26px;color:#000;transform:scaleX(0.9778)">File</div>
<div class="tx" style="left:38.22px;top:26px;color:#000;transform:scaleX(0.9850)">Edit</div>
<div class="tx" style="left:72.17px;top:26px;color:#000;transform:scaleX(0.9324)">Search</div>
<div class="tx" style="left:121.90px;top:26px;color:#000;transform:scaleX(0.9538)">View</div>
<div class="tx" style="left:160.40px;top:26px;color:#000;transform:scaleX(1.0000)">Encoding</div>
<div class="tx" style="left:224.11px;top:26px;color:#000;transform:scaleX(0.9923)">Language</div>
<div class="tx" style="left:290.21px;top:26px;color:#000;transform:scaleX(0.9881)">Settings</div>
<div class="tx" style="left:347.90px;top:26px;color:#000;transform:scaleX(0.9643)">Tools</div>
<div class="tx" style="left:387.85px;top:26px;color:#000;transform:scaleX(1.0469)">Macro</div>
<div class="tx" style="left:436.02px;top:26px;color:#000;transform:scaleX(0.9810)">Run</div>
<div class="tx" style="left:470.98px;top:26px;color:#000;transform:scaleX(1.0184)">Plugins</div>
<div class="tx" style="left:524.80px;top:26px;color:#000;transform:scaleX(1.0233)">Window</div>
<div class="tx" style="left:582.20px;top:26px;color:#000;transform:scaleX(0.8286)">?</div>
<div class="tx" style="left:1352.00px;top:26px;color:#000;transform:scaleX(0.9375)">X</div>
<div class="tx" style="left:22.00px;top:76px;color:#808080;transform:scaleX(0.8861)">des-docker.bat</div>
<div class="tx" style="left:133.00px;top:76px;color:#808080;transform:scaleX(0.8613)">des-kinesis-t24.properties</div>
<div class="tx" style="left:291.60px;top:76px;color:#808080;transform:scaleX(0.9075)">kafka_setup.sh</div>
<div class="tx" style="left:404.00px;top:76px;color:#808080;transform:scaleX(0.9035)">kafka.yaml</div>
<div class="tx" style="left:494.90px;top:76px;color:#808080;transform:scaleX(0.9080)">kafka.yml</div>
<div class="tx" style="left:580.70px;top:76px;color:#808080;transform:scaleX(0.8376)">strimzi-destroy.sh</div>
<div class="tx" style="left:699.60px;top:76px;color:#808080;transform:scaleX(0.8677)">stop-servicerequest-Postgresql.bat</div>
<div class="tx" style="left:901.60px;top:76px;color:#808080;transform:scaleX(0.8877)">kafka.yaml</div>
<div class="tx" style="left:992.60px;top:76px;color:#808080;transform:scaleX(0.8271)">strimzi-install.sh</div>
<div class="tx" style="left:1103.60px;top:76px;color:#000;transform:scaleX(0.8282)">strimzi-install.sh</div>
<div class="tx" style="left:1.51px;top:711px;color:#000;transform:scaleX(0.9932)">Unix script file</div>
<div class="tx" style="left:629.04px;top:711px;color:#000;transform:scaleX(0.9593)">length : 545&nbsp;&nbsp;&nbsp; lines : 18</div>
<div class="tx" style="left:829.08px;top:711px;color:#000;transform:scaleX(0.9211)">Ln : 8&nbsp;&nbsp;&nbsp; Col : 33&nbsp;&nbsp;&nbsp; Sel : 6 | 1</div>
<div class="tx" style="left:1089.46px;top:711px;color:#000;transform:scaleX(0.9396)">Unix (LF)</div>
<div class="tx" style="left:1199.03px;top:711px;color:#000;transform:scaleX(0.9697)">UTF-8</div>
<div class="tx" style="left:1319.06px;top:711px;color:#000;transform:scaleX(0.9368)">INS</div>
<div class="tx" style="left:1259.94px;top:732px;color:#fff;transform:scaleX(0.9558)">1:21 PM</div>
<div class="tx" style="left:1252.24px;top:750px;color:#fff;transform:scaleX(0.9621)">11/24/2021</div>

</body></html>
